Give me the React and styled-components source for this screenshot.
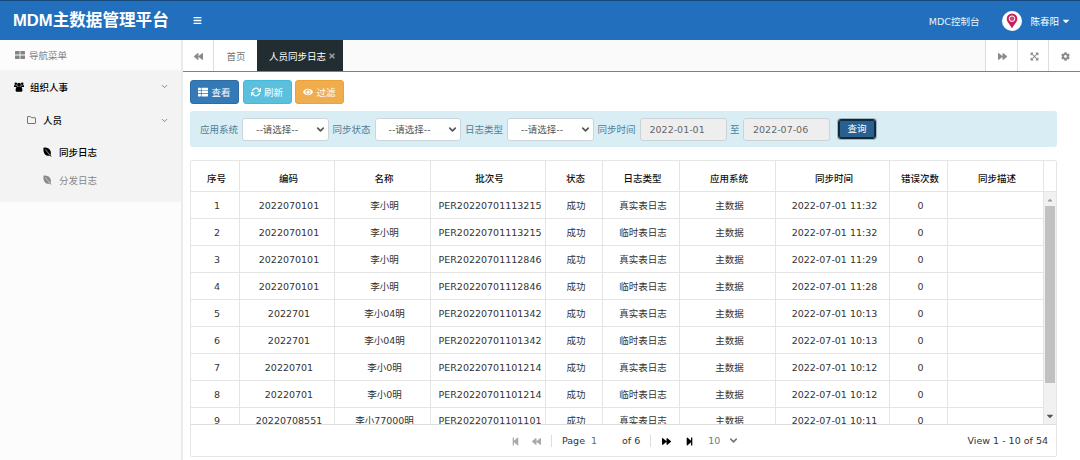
import React from "react";
import styled, { createGlobalStyle } from "styled-components";
import {
  FaBars,
  FaBackward,
  FaForward,
  FaStepBackward,
  FaStepForward,
  FaThList,
  FaCog,
  FaTimes,
  FaEye,
  FaCaretDown,
  FaCaretUp,
  FaExpandArrowsAlt,
} from "react-icons/fa";
import { FiChevronDown, FiRefreshCw } from "react-icons/fi";

const GlobalStyle = createGlobalStyle`
  * {
    box-sizing: border-box;
  }
  body {
    margin: 0;
    background: #fff;
    color: #333;
    font-family: "DejaVu Sans", "Noto Sans CJK SC", sans-serif;
    font-size: 9.5px;
    overflow: hidden;
  }
  svg {
    display: block;
    flex: none;
  }
`;

const Page = styled.div`
  display: flex;
  flex-direction: column;
  width: 1080px;
  height: 460px;
`;

const Header = styled.header`
  display: flex;
  align-items: center;
  height: 40px;
  flex: none;
  padding: 0 9px 0 13px;
  border-top: 1px solid #174a7c;
  background: #2270bd;
  color: #fff;
`;

const Brand = styled.div`
  width: 180px;
  font: bold 16.6px/38px "Liberation Sans", "Noto Sans CJK SC", sans-serif;
  white-space: nowrap;
`;

const MenuToggle = styled.span`
  padding-bottom: 1px;
`;

const HeaderLink = styled.span`
  margin-left: auto;
  color: #e8f2fb;
`;

const Avatar = styled.div`
  display: flex;
  align-items: center;
  justify-content: center;
  width: 20px;
  height: 20px;
  margin: 1px 8px 0 23px;
  border-radius: 50%;
  background: #fff;
`;

const UserName = styled.span`
  display: flex;
  align-items: center;
  gap: 2px;
`;

const Body = styled.div`
  display: flex;
  flex: 1;
  min-height: 0;
`;

const Sidebar = styled.aside`
  width: 183px;
  flex: none;
  border-right: 2px solid #e9eced;
  background: #fcfcfc;
`;

const MenuTitle = styled.div`
  display: flex;
  align-items: center;
  gap: 4px;
  height: 30px;
  padding-left: 15px;
  color: #848484;
`;

const Menu = styled.nav`
  height: 132px;
  background: #f3f3f3;
`;

const MenuItem = styled.div`
  display: flex;
  align-items: center;
  gap: ${(p) => p.$gap || 6}px;
  height: ${(p) => p.$height}px;
  padding: 0 12px 0 ${(p) => p.$indent}px;
  color: ${(p) => (p.$muted ? "#888" : "#000")};
  font-weight: ${(p) => (p.$muted ? 400 : 500)};

  svg:nth-of-type(2) {
    margin-left: auto;
    color: #666;
  }
`;

const Main = styled.main`
  display: flex;
  flex-direction: column;
  flex: 1;
  min-width: 0;
`;

const TabBar = styled.div`
  display: flex;
  height: 32px;
  flex: none;
  border-bottom: 1px solid #6b8a84;
  background: #fafafa;
`;

const TabButton = styled.div`
  display: flex;
  align-items: center;
  justify-content: center;
  width: ${(p) => p.$width}px;
  padding: 2px 0 0 ${(p) => (p.$side === "right" ? 2 : 0)}px;
  border-left: ${(p) => (p.$side === "right" ? "1px solid #ddd" : 0)};
  border-right: ${(p) => (p.$side === "left" ? "1px solid #ddd" : 0)};
  background: #fff;
  color: #8a8a8a;
`;

const Tab = styled.div`
  display: flex;
  align-items: center;
  justify-content: center;
  gap: 2px;
  width: ${(p) => p.$width}px;
  padding-left: ${(p) => (p.$active ? 5 : 1)}px;
  background: ${(p) => (p.$active ? "#222d32" : "#fff")};
  color: ${(p) => (p.$active ? "#fff" : "#777")};
`;

const Spacer = styled.div`
  flex: 1;
`;

const Content = styled.div`
  padding: 8px 23px 0 7px;
`;

const Toolbar = styled.div`
  display: flex;
  gap: 3.5px;
  height: 24px;
`;

const ToolButton = styled.button`
  display: flex;
  align-items: center;
  justify-content: center;
  gap: 3px;
  width: 49px;
  padding: 0;
  border: 1px solid ${(p) => p.$border};
  border-radius: 3px;
  background: ${(p) => p.$color};
  color: #fff;
  font: inherit;
`;

const FilterBar = styled.div`
  display: flex;
  align-items: center;
  height: 36px;
  margin-top: 7px;
  padding-left: 10px;
  border-radius: 3px;
  background: #d9edf5;
  color: #4f7e95;
`;

const Label = styled.label`
  width: ${(p) => p.$width || 42}px;
  padding-left: ${(p) => p.$inset || 0}px;
  white-space: nowrap;
`;

const Select = styled.div`
  display: flex;
  align-items: center;
  justify-content: space-between;
  width: 86.5px;
  height: 23px;
  margin-right: 4px;
  padding: 0 2px 0 13px;
  border: 1px solid #ccd6da;
  border-radius: 3px;
  background: #fff;
  color: #555;
`;

const DateInput = styled.div`
  width: 87px;
  height: 23px;
  padding-left: 9px;
  border: 1px solid #ccd3d6;
  border-radius: 3px;
  background: #eee;
  color: #666;
  line-height: 22px;
`;

const SearchButton = styled.button`
  width: 36px;
  height: 18px;
  margin: -1px 0 0 9px;
  padding: 0;
  border: 1px solid #122b40;
  border-radius: 2px;
  outline: 1px solid #17242e;
  box-shadow: 0 0 0 2px #9db6c4;
  background: #286090;
  color: #fff;
  font: inherit;
  line-height: 14px;
`;

const Grid = styled.section`
  height: 297px;
  margin-top: 13px;
  border: 1px solid #e6e6e6;
  border-radius: 2px;
`;

const columns = "49px 95px 96px 115px 57px 77px 96px 114px 58px 96px";

const GridHead = styled.div`
  display: grid;
  grid-template-columns: ${columns} 1fr;
  height: 31px;
  border-bottom: 1px solid #e4e4e4;
  color: #111;
  font-weight: 500;
`;

const GridBody = styled.div`
  display: flex;
  height: 233px;
  overflow: hidden;
  border-bottom: 1px solid #ddd;
`;

const Rows = styled.div`
  width: 853px;
`;

const Cell = styled.div`
  display: flex;
  align-items: center;
  justify-content: center;
  padding: 1px 0 0 4px;
  border-right: 1px solid #e4e4e4;
  line-height: 12px;
  white-space: nowrap;
`;

const Row = styled.div`
  display: grid;
  grid-template-columns: ${columns};
  height: 27px;
  border-bottom: 1px solid #e4e4e4;

  /* the last row is only partly scrolled into view */
  &:last-child {
    height: 25px;
    border-bottom: 0;
  }

  &:last-child ${Cell} {
    padding-top: 0;
  }
`;

const HeadCell = styled(Cell)`
  padding: 5px 0 0 3px;

  &:last-child {
    border-right: 0;
  }
`;

const Scrollbar = styled.div`
  display: flex;
  flex-direction: column;
  align-items: center;
  flex: 1;
  padding: 4px 0 3px;
  background: #f1f1f1;
  color: #555;
`;

const ScrollThumb = styled.div`
  width: 10px;
  height: 177px;
  margin: 2px 0 auto;
  background: #c1c1c1;
`;

const Pager = styled.div`
  display: grid;
  grid-template-columns: 1fr auto 1fr;
  align-items: center;
  height: 31px;
`;

const PagerControls = styled.div`
  display: flex;
  align-items: center;
  grid-column: 2;
  width: 230px;
  margin-left: 5px;
`;

const PagerIcon = styled.span`
  width: ${(p) => p.$width}px;
  padding-top: 2px;
  color: ${(p) => (p.$disabled ? "#aaa" : "#000")};
`;

const Divider = styled.i`
  width: 1px;
  height: 12px;
  margin: 0 ${(p) => p.$after || 10}px 0 ${(p) => p.$before || 0}px;
  background: #ddd;
`;

const PageInput = styled.span`
  width: 31px;
  margin-left: 6px;
  color: #666;
`;

const PageSize = styled.span`
  display: flex;
  align-items: center;
  gap: 8px;
  color: #777;
`;

const RecordInfo = styled.span`
  padding-right: 8px;
  text-align: right;
  white-space: nowrap;
`;

const headers = [
  "序号",
  "编码",
  "名称",
  "批次号",
  "状态",
  "日志类型",
  "应用系统",
  "同步时间",
  "错误次数",
  "同步描述",
  "",
];

const logs = [
  ["2022070101", "李小明", "PER20220701113215", "真实表日志", "11:32"],
  ["2022070101", "李小明", "PER20220701113215", "临时表日志", "11:32"],
  ["2022070101", "李小明", "PER20220701112846", "真实表日志", "11:29"],
  ["2022070101", "李小明", "PER20220701112846", "临时表日志", "11:28"],
  ["2022701", "李小04明", "PER20220701101342", "真实表日志", "10:13"],
  ["2022701", "李小04明", "PER20220701101342", "临时表日志", "10:13"],
  ["20220701", "李小0明", "PER20220701101214", "真实表日志", "10:12"],
  ["20220701", "李小0明", "PER20220701101214", "临时表日志", "10:12"],
  ["20220708551", "李小77000明", "PER20220701101101", "真实表日志", "10:11"],
];

const LogRow = ({ index, log }) => {
  const [code, name, batch, type, time] = log;
  return (
    <Row>
      <Cell>{index + 1}</Cell>
      <Cell>{code}</Cell>
      <Cell>{name}</Cell>
      <Cell>{batch}</Cell>
      <Cell>成功</Cell>
      <Cell>{type}</Cell>
      <Cell>主数据</Cell>
      <Cell>2022-07-01 {time}</Cell>
      <Cell>0</Cell>
      <Cell />
    </Row>
  );
};

const Pin = () => (
  <svg width="12" height="16" viewBox="0 0 12 16">
    <path
      d="M6 .5A5.300 5.300 0 0 0 .7 5.800C.7 9 4 11.500 6 15.500c2-4 5.300-6.500 5.300-9.700A5.300 5.300 0 0 0 6 .5z"
      fill="#c8205f"
    />
    <circle cx="6" cy="5.700" r="2.800" fill="#d9447c" stroke="#fff" strokeWidth="1" />
  </svg>
);

const TilesIcon = () => (
  <svg width="10" height="8" viewBox="0 0 10 8" fill="currentColor">
    <rect width="4.600" height="3.600" rx=".4" />
    <rect x="5.400" width="4.600" height="3.600" rx=".4" />
    <rect y="4.400" width="4.600" height="3.600" rx=".4" />
    <rect x="5.400" y="4.400" width="4.600" height="3.600" rx=".4" />
  </svg>
);

const GroupIcon = () => (
  <svg width="10" height="10" viewBox="0 0 10 10" fill="currentColor">
    <circle cx="1.800" cy="1.700" r="1.300" />
    <circle cx="8.200" cy="1.700" r="1.300" />
    <circle cx="5" cy="2.700" r="1.900" />
    <path d="M0 3.200h2.600l.6 1.800H0zM10 3.200H7.400L6.800 5H10z" />
    <path d="M3.300 4.600h3.400c1.200.5 1.700 2 1.700 3.600 0 1-.6 1.500-1.500 1.500H3.100c-.9 0-1.500-.5-1.500-1.500 0-1.600.5-3.100 1.700-3.600z" />
  </svg>
);

const FolderIcon = () => (
  <svg width="9" height="8" viewBox="0 0 9 8" fill="none" stroke="#555">
    <path d="M.5 7V1q0-.5.5-.5h2.300l1 1.200H8q.5 0 .5.500V7q0 .5-.5.500H1Q.5 7.500.5 7z" strokeWidth=".8" />
  </svg>
);

const LeafIcon = () => (
  <svg width="9" height="10" viewBox="0 0 9 10">
    <path
      d="M.5.7C3.500.3 6.300 1.300 7.400 3.700c.8 1.700.5 3.500.1 4.400L8.700 9.500h-1l-.8-.8c-1.600.4-3.900 0-5.200-1.800C.4 5.200.3 2.700.5.7z"
      fill="currentColor"
    />
    <path d="M2.300 2.400 7 8.300" stroke="#f3f3f3" strokeWidth=".6" fill="none" />
  </svg>
);

const Chevron = () => <FiChevronDown size={11} strokeWidth={3.6} />;

export default function App() {
  return (
    <>
      <GlobalStyle />
      <Page>
        <Header>
          <Brand>MDM主数据管理平台</Brand>
          <MenuToggle>
            <FaBars size={9} />
          </MenuToggle>
          <HeaderLink>MDC控制台</HeaderLink>
          <Avatar>
            <Pin />
          </Avatar>
          <UserName>
            陈春阳 <FaCaretDown size={10} />
          </UserName>
        </Header>
        <Body>
          <Sidebar>
            <MenuTitle>
              <TilesIcon />
              导航菜单
            </MenuTitle>
            <Menu>
              <MenuItem $height={33} $indent={14}>
                <GroupIcon />
                组织人事
                <FiChevronDown size={9} />
              </MenuItem>
              <MenuItem $height={34} $indent={27} $gap={7}>
                <FolderIcon />
                人员
                <FiChevronDown size={9} />
              </MenuItem>
              <MenuItem $height={29} $indent={43} $gap={7}>
                <LeafIcon />
                同步日志
              </MenuItem>
              <MenuItem $height={27} $indent={43} $gap={7} $muted>
                <LeafIcon />
                分发日志
              </MenuItem>
            </Menu>
          </Sidebar>
          <Main>
            <TabBar>
              <TabButton $width={31} $side="left">
                <FaBackward size={9} />
              </TabButton>
              <Tab $width={43}>首页</Tab>
              <Tab $width={86} $active>
                人员同步日志 <FaTimes size={8} color="#9aa3a6" />
              </Tab>
              <Spacer />
              <TabButton $width={32} $side="right">
                <FaForward size={9} />
              </TabButton>
              <TabButton $width={31} $side="right">
                <FaExpandArrowsAlt size={9} />
              </TabButton>
              <TabButton $width={32} $side="right">
                <FaCog size={9} />
              </TabButton>
            </TabBar>
            <Content>
              <Toolbar>
                <ToolButton $color="#337ab7" $border="#2e6da4">
                  <FaThList size={10} /> 查看
                </ToolButton>
                <ToolButton $color="#5bc0de" $border="#46b8da">
                  <FiRefreshCw size={10} strokeWidth={3} /> 刷新
                </ToolButton>
                <ToolButton $color="#f0ad4e" $border="#eea236">
                  <FaEye size={10} /> 过滤
                </ToolButton>
              </Toolbar>
              <FilterBar>
                <Label>应用系统</Label>
                <Select>
                  --请选择-- <Chevron />
                </Select>
                <Label>同步状态</Label>
                <Select>
                  --请选择-- <Chevron />
                </Select>
                <Label>日志类型</Label>
                <Select>
                  --请选择-- <Chevron />
                </Select>
                <Label>同步时间</Label>
                <DateInput>2022-01-01</DateInput>
                <Label $width={16.5} $inset={3.5}>
                  至
                </Label>
                <DateInput>2022-07-06</DateInput>
                <SearchButton>查询</SearchButton>
              </FilterBar>
              <Grid>
                <GridHead>
                  {headers.map((header, index) => (
                    <HeadCell key={index}>{header}</HeadCell>
                  ))}
                </GridHead>
                <GridBody>
                  <Rows>
                    {logs.map((log, index) => (
                      <LogRow key={index} index={index} log={log} />
                    ))}
                  </Rows>
                  <Scrollbar>
                    <FaCaretUp size={8} color="#999" />
                    <ScrollThumb />
                    <FaCaretDown size={10} />
                  </Scrollbar>
                </GridBody>
                <Pager>
                  <PagerControls>
                    <PagerIcon $width={21} $disabled>
                      <FaStepBackward size={9} />
                    </PagerIcon>
                    <PagerIcon $width={19} $disabled>
                      <FaBackward size={9} />
                    </PagerIcon>
                    <Divider />
                    Page
                    <PageInput>1</PageInput>
                    of 6
                    <Divider $before={10} $after={11} />
                    <PagerIcon $width={23}>
                      <FaForward size={9} />
                    </PagerIcon>
                    <PagerIcon $width={23}>
                      <FaStepForward size={9} />
                    </PagerIcon>
                    <PageSize>
                      10 <Chevron />
                    </PageSize>
                  </PagerControls>
                  <RecordInfo>View 1 - 10 of 54</RecordInfo>
                </Pager>
              </Grid>
            </Content>
          </Main>
        </Body>
      </Page>
    </>
  );
}
